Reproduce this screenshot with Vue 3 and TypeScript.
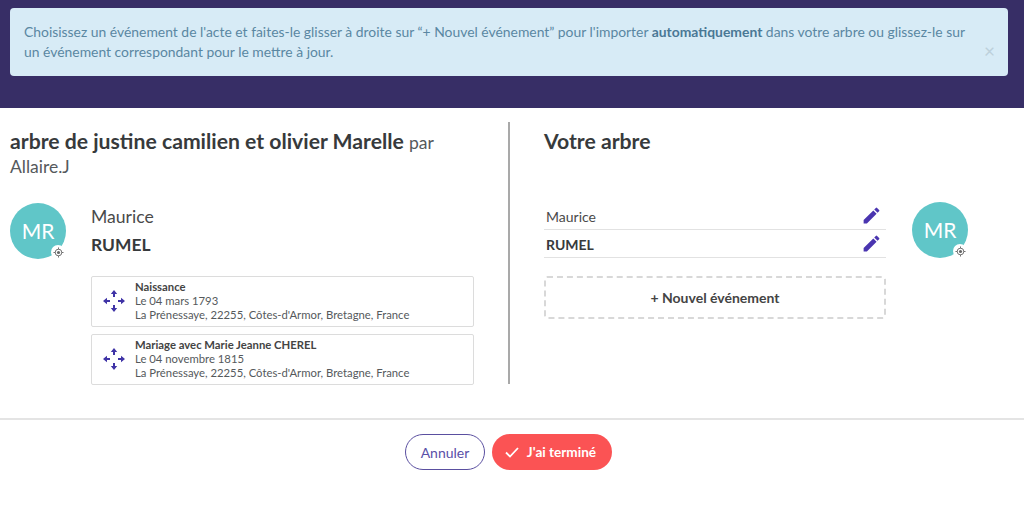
<script setup lang="ts">
const events = [
  { title: 'Naissance', date: 'Le 04 mars 1793', place: 'La Prénessaye, 22255, Côtes-d\'Armor, Bretagne, France' },
  { title: 'Mariage avec Marie Jeanne CHEREL', date: 'Le 04 novembre 1815', place: 'La Prénessaye, 22255, Côtes-d\'Armor, Bretagne, France' },
]
const names = [
  { text: 'Maurice', bold: false },
  { text: 'RUMEL', bold: true },
]
</script>

<template>
  <div class="page">
    <header class="band">
      <div class="alert">
        <p>Choisissez un événement de l'acte et faites-le glisser à droite sur “+ Nouvel événement” pour l'importer <b>automatiquement</b> dans votre arbre ou glissez-le sur un événement correspondant pour le mettre à jour.</p>
        <span class="close">×</span>
      </div>
    </header>

    <main class="cols">
      <section class="left">
        <h2 class="title">arbre de justine camilien et olivier Marelle <small>par Allaire.J</small></h2>
        <div class="person">
          <div class="avatar">
            MR
            <span class="target">
              <svg viewBox="0 0 12 12" width="11" height="11" fill="none" stroke="#666" stroke-width="1">
                <circle cx="6" cy="6" r="3.6" />
                <circle cx="6" cy="6" r="1.7" fill="#666" stroke="none" />
                <path d="M6 .5v2M6 9.5v2M.5 6h2M9.5 6h2" />
              </svg>
            </span>
          </div>
          <div class="person-body">
            <div class="first">Maurice</div>
            <div class="last">RUMEL</div>
            <div v-for="e in events" :key="e.title" class="event">
              <svg class="move" viewBox="0 0 24 24" width="24" height="24" fill="#3f33a6">
                <path d="M12 1 8.8 5h2.2v3h2V5h2.2z" />
                <path d="M12 23l-3.2-4h2.2v-3h2v3h2.2z" />
                <path d="M1 12l4-3.2V11h3v2H5v2.200z" />
                <path d="M23 12l-4-3.2V11h-3v2h3v2.200z" />
              </svg>
              <div class="event-text">
                <div class="event-title">{{ e.title }}</div>
                <div>{{ e.date }}</div>
                <div>{{ e.place }}</div>
              </div>
            </div>
          </div>
        </div>
      </section>

      <section class="right">
        <div class="right-main">
          <h2 class="title">Votre arbre</h2>
          <div class="fields">
            <div v-for="n in names" :key="n.text" class="field" :class="{ bold: n.bold }">
              <span>{{ n.text }}</span>
              <svg viewBox="0 0 24 24" width="21" height="21" fill="#4a35b0">
                <path d="M3 17.25V21h3.75L17.81 9.94l-3.75-3.75L3 17.25zM20.71 7.04a1 1 0 0 0 0-1.41l-2.34-2.34a1 1 0 0 0-1.41 0l-1.83 1.83 3.75 3.75 1.83-1.83z" />
              </svg>
            </div>
          </div>
          <div class="drop">+ Nouvel événement</div>
        </div>
        <div class="avatar">
          MR
          <span class="target">
            <svg viewBox="0 0 12 12" width="11" height="11" fill="none" stroke="#666" stroke-width="1">
              <circle cx="6" cy="6" r="3.6" />
              <circle cx="6" cy="6" r="1.7" fill="#666" stroke="none" />
              <path d="M6 .5v2M6 9.5v2M.5 6h2M9.5 6h2" />
            </svg>
          </span>
        </div>
      </section>
    </main>

    <footer class="foot">
      <button class="btn ghost">Annuler</button>
      <button class="btn primary">
        <svg viewBox="0 0 16 16" width="16" height="16" fill="none" stroke="#fff" stroke-width="1.8">
          <path d="M2 8.5l4 4 8-8.5" />
        </svg>
        J'ai terminé
      </button>
    </footer>
  </div>
</template>

<style scoped>
.page {
  width: 1024px;
  height: 516px;
  overflow: hidden;
  background: #fff;
  font-family: Lato, "Liberation Sans", sans-serif;
  color: #373a3c;
}
.band {
  height: 108px;
  box-sizing: border-box;
  padding: 8px 16px 0 10px;
  background: #372e66;
}
.alert {
  position: relative;
  height: 68px;
  box-sizing: border-box;
  padding: 14px 40px 0 14px;
  border-radius: 4px;
  background: #d7ebf6;
  color: #5a87a2;
  font-size: 13.9px;
  line-height: 20px;
}
.alert p { margin: 0; }
.alert b { color: #4a7895; font-weight: 700; }
.close {
  position: absolute;
  right: 13px;
  top: 33px;
  font-size: 19px;
  line-height: 20px;
  color: #bdd0db;
}
.cols {
  display: flex;
  height: 312px;
  box-sizing: border-box;
  padding-top: 14px;
  border-bottom: 2px solid #e4e4e4;
}
.left {
  width: 510px;
  height: 262px;
  box-sizing: border-box;
  padding: 0 34px 0 10px;
  border-right: 2px solid #a9a9a9;
}
.title {
  margin: 8px 0 0;
  font-size: 21.2px;
  line-height: 22px;
  font-weight: 700;
  color: #373a3c;
}
.title small {
  font-size: 17.5px;
  font-weight: 400;
  color: #55595c;
}
.person {
  display: flex;
  gap: 25px;
  margin-top: 25px;
}
.avatar {
  position: relative;
  flex: none;
  width: 56px;
  height: 56px;
  border-radius: 50%;
  background: #60c6c8;
  color: #fff;
  font-size: 21px;
  line-height: 56px;
  text-align: center;
}
.target {
  position: absolute;
  right: 1px;
  bottom: 0;
  display: flex;
  align-items: center;
  justify-content: center;
  width: 14px;
  height: 14px;
  border-radius: 50%;
  background: #fff;
}
.person-body { flex: 1; min-width: 0; padding-top: 3px; }
.first { font-size: 17.6px; line-height: 21px; color: #4a4a4a; }
.last { margin: 7px 0 21px; font-size: 17.4px; line-height: 21px; font-weight: 700; }
.event {
  display: flex;
  align-items: center;
  gap: 9px;
  height: 51px;
  box-sizing: border-box;
  margin-bottom: 7px;
  padding: 0 0 2px 10px;
  border: 1px solid #dcdcdc;
  border-radius: 2px;
  color: #55595c;
  font-size: 11.3px;
  line-height: 14px;
}
.event-title { font-weight: 700; color: #444; }
.right {
  display: flex;
  align-items: flex-start;
  padding-left: 34px;
}
.right-main { width: 342px; margin-right: 26px; }
.fields { margin-top: 50px; }
.field {
  display: flex;
  align-items: center;
  justify-content: space-between;
  height: 28px;
  box-sizing: border-box;
  padding: 0 4px 0 2px;
  border-bottom: 1px solid #e2e2e2;
  font-size: 14px;
  color: #4a4a4a;
}
.field span { padding-top: 2px; }
.field.bold { font-weight: 700; color: #373a3c; }
.drop {
  display: flex;
  align-items: center;
  justify-content: center;
  height: 43px;
  box-sizing: border-box;
  margin-top: 18px;
  border: 2px dashed #d8d8d8;
  border-radius: 3px;
  font-size: 14px;
  font-weight: 700;
  color: #444;
}
.right .avatar { margin-top: 80px; }
.foot {
  display: flex;
  justify-content: center;
  gap: 7px;
  padding: 14px 7px 0 0;
}
.btn {
  display: flex;
  align-items: center;
  justify-content: center;
  height: 36px;
  border-radius: 18px;
  font-family: inherit;
  font-size: 14px;
}
.ghost {
  width: 80px;
  border: 1px solid #5a4fa0;
  background: #fff;
  color: #5a4fa8;
}
.primary {
  gap: 7px;
  width: 120px;
  border: none;
  padding: 0 4px 0 0;
  background: #fb5354;
  color: #fff;
  font-size: 13.6px;
  font-weight: 700;
}
</style>

<style>
body { margin: 0; }
</style>
